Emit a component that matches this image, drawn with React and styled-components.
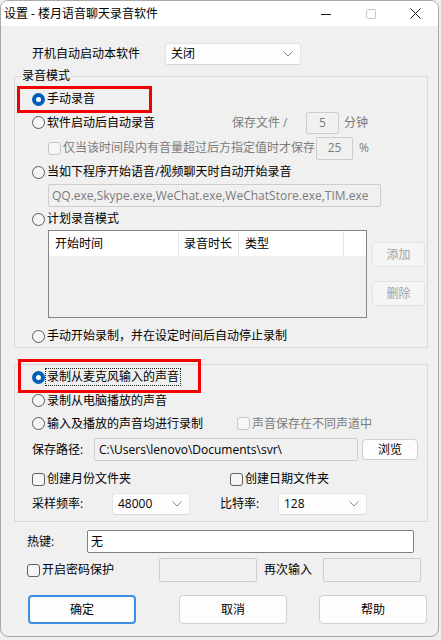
import React from 'react';
import styled, { createGlobalStyle } from 'styled-components';

const GlobalStyle = createGlobalStyle`
  html, body { margin: 0; padding: 0; }
  body {
    background: #efefef;
    font-family: "Open Sans", "Noto Sans CJK SC", "Microsoft YaHei", sans-serif;
    font-size: 12px;
    color: #000;
    overflow: hidden;
  }
  * { box-sizing: border-box; }
`;

const Window = styled.div`
  width: 439px;
  height: 637px;
  background: #f0f0f0;
  border: 1px solid #a8a8a8;
  border-radius: 8px;
  overflow: hidden;
  display: flex;
  flex-direction: column;
`;

const TitleBar = styled.div`
  height: 25px;
  flex-shrink: 0;
  background: #ffffff;
  display: flex;
  align-items: center;
`;

const TitleText = styled.div`
  flex: 1;
  padding-left: 3px;
  font-size: 12px;
  line-height: 14px;
  white-space: nowrap;
`;

const CaptionButton = styled.div`
  width: 45px;
  height: 25px;
  display: flex;
  align-items: center;
  justify-content: center;
`;

const Body = styled.div`
  display: flex;
  flex-direction: column;
  padding-top: 17px;
`;

const Row = styled.div`
  display: flex;
  align-items: center;
  height: ${p => p.$h}px;
  margin-top: ${p => p.$mt || 0}px;
  padding-left: ${p => p.$pl || 0}px;
  flex-shrink: 0;
  white-space: nowrap;
  line-height: 14px;
`;

const Label = styled.span`
  display: inline-flex;
  align-items: center;
  width: ${p => (p.$w ? `${p.$w}px` : 'auto')};
  margin-left: ${p => p.$ml || 0}px;
  color: ${p => (p.$muted ? '#7b7b7b' : '#000')};
  flex-shrink: 0;
`;

const Select = styled.div`
  width: ${p => p.$w}px;
  height: 22px;
  background: #fdfdfd;
  border: 1px solid #e4e4e4;
  border-bottom-color: #d6d6d6;
  border-radius: 3px;
  display: flex;
  align-items: center;
  justify-content: space-between;
  padding: 0 7px 0 5px;
  flex-shrink: 0;
`;

const GroupBox = styled.div`
  position: relative;
  width: 414px;
  height: ${p => p.$h}px;
  margin: ${p => p.$mt}px 0 0 13px;
  padding-top: ${p => p.$pt}px;
  border: 1px solid #d9d9d9;
  display: flex;
  flex-direction: column;
  flex-shrink: 0;
`;

const GroupTitle = styled.span`
  position: absolute;
  left: 6px;
  top: -8px;
  padding: 0 1px;
  background: #f0f0f0;
  line-height: 14px;
`;

const RedMark = styled.div`
  position: absolute;
  left: ${p => p.$x}px;
  top: ${p => p.$y}px;
  width: ${p => p.$w}px;
  height: ${p => p.$h}px;
  border: 3px solid #f40000;
  pointer-events: none;
`;

const Choice = styled.span`
  display: inline-flex;
  align-items: center;
  gap: 2px;
  width: ${p => (p.$w ? `${p.$w}px` : 'auto')};
  color: ${p => (p.$disabled ? '#7b7b7b' : '#000')};
  flex-shrink: 0;
`;

const RadioDot = styled.span`
  position: relative;
  width: 13px;
  height: 13px;
  border-radius: 50%;
  flex-shrink: 0;
  background: ${p => (p.$on ? '#005fb8' : '#f6f6f6')};
  border: ${p => (p.$on ? 'none' : '1px solid #5a5a5a')};
  &::after {
    content: '';
    display: ${p => (p.$on ? 'block' : 'none')};
    position: absolute;
    left: 4px;
    top: 4px;
    width: 5px;
    height: 5px;
    border-radius: 50%;
    background: #fff;
  }
`;

const CheckSquare = styled.span`
  width: 13px;
  height: 13px;
  border-radius: 3px;
  flex-shrink: 0;
  background: #f6f6f6;
  border: 1px solid ${p => (p.$disabled ? '#c6c6c6' : '#5f5f5f')};
`;

const FocusText = styled.span`
  outline: 1px dotted #222;
  outline-offset: 1px;
`;

const TextBox = styled.div`
  width: ${p => p.$w}px;
  height: ${p => p.$h || 23}px;
  margin-left: ${p => p.$ml || 0}px;
  margin-top: ${p => p.$mt || 0}px;
  background: ${p => (p.$white ? '#ffffff' : '#f0f0f0')};
  border: 1px solid ${p => (p.$white ? '#7f7f7f' : '#cdcdcd')};
  border-radius: 2px;
  color: ${p => (p.$muted ? '#7b7b7b' : '#000')};
  display: flex;
  align-items: center;
  justify-content: ${p => (p.$center ? 'center' : 'flex-start')};
  padding-left: ${p => (p.$center ? 0 : p.$pad ?? 3)}px;
  flex-shrink: 0;
  white-space: nowrap;
  overflow: hidden;
  line-height: 14px;
`;

const ListArea = styled.div`
  display: flex;
  height: 88px;
  padding-left: 33px;
  flex-shrink: 0;
`;

const List = styled.div`
  width: 319px;
  height: 88px;
  border: 1px solid #858585;
  background: #f0f0f0;
  display: flex;
  flex-direction: column;
`;

const ListHeader = styled.div`
  height: 25px;
  background: #ffffff;
  display: flex;
  flex-shrink: 0;
`;

const HeaderCell = styled.div`
  width: ${p => p.$w}px;
  padding-left: ${p => p.$pl}px;
  border-right: ${p => (p.$last ? 'none' : '1px solid #e5e5e5')};
  display: flex;
  align-items: center;
  flex-shrink: 0;
  line-height: 14px;
`;

const SideButtons = styled.div`
  display: flex;
  flex-direction: column;
  gap: 14px;
  padding-top: 12px;
  margin-left: 5px;
`;

const Button = styled.div`
  width: ${p => p.$w}px;
  height: ${p => p.$h}px;
  margin-left: ${p => p.$ml || 0}px;
  background: ${p => (p.$disabled ? '#f5f5f5' : '#fdfdfd')};
  border: ${p =>
    p.$primary ? '2px solid #3a8ee6' : `1px solid ${p.$disabled ? '#e3e3e3' : '#d0d0d0'}`};
  border-radius: 4px;
  color: ${p => (p.$disabled ? '#a2a2a2' : '#000')};
  display: flex;
  align-items: center;
  justify-content: center;
  flex-shrink: 0;
  line-height: 14px;
`;

const Chevron = () => (
  <svg width="10" height="6" viewBox="0 0 10 6">
    <path d="M0.5 0.5 L5 5 L9.5 0.5" fill="none" stroke="#8a8a8a" strokeWidth="1" />
  </svg>
);

const Radio = ({ on, children, w }) => (
  <Choice $w={w}>
    <RadioDot $on={on} />
    {children}
  </Choice>
);

const Check = ({ disabled, children, w }) => (
  <Choice $w={w} $disabled={disabled}>
    <CheckSquare $disabled={disabled} />
    {children}
  </Choice>
);

export default function App() {
  return (
    <>
      <GlobalStyle />
      <Window>
        <TitleBar>
          <TitleText>设置 - 楼月语音聊天录音软件</TitleText>
          <CaptionButton>
            <svg width="10" height="10" viewBox="0 0 10 10">
              <path d="M0 5.5 H10" stroke="#1a1a1a" strokeWidth="1" />
            </svg>
          </CaptionButton>
          <CaptionButton>
            <svg width="10" height="10" viewBox="0 0 10 10">
              <rect x="0.5" y="0.5" width="9" height="9" rx="1" fill="none" stroke="#c4c4c4" strokeWidth="1" />
            </svg>
          </CaptionButton>
          <CaptionButton>
            <svg width="11" height="11" viewBox="0 0 11 11">
              <path d="M0.5 0.5 L10.5 10.5 M10.5 0.5 L0.5 10.5" stroke="#1a1a1a" strokeWidth="1" />
            </svg>
          </CaptionButton>
        </TitleBar>

        <Body>
          <Row $h={22} $pl={31}>
            <Label $w={133}>开机自动启动本软件</Label>
            <Select $w={136}>
              <span>关闭</span>
              <Chevron />
            </Select>
          </Row>

          <GroupBox $mt={11} $h={272} $pt={11}>
            <GroupTitle>录音模式</GroupTitle>
            <RedMark $x={2} $y={9} $w={135} $h={27} />
            <Row $h={22} $pl={17}>
              <Radio on>手动录音</Radio>
            </Row>
            <Row $h={25} $pl={17}>
              <Radio w={200}>软件启动后自动录音</Radio>
              <Label $w={74} $muted>保存文件 /</Label>
              <TextBox $w={33} $h={22} $center $muted>5</TextBox>
              <Label $ml={5} $muted>分钟</Label>
            </Row>
            <Row $h={26} $pl={33}>
              <Check disabled w={268}>仅当该时间段内有音量超过后方指定值时才保存</Check>
              <TextBox $w={37} $center $muted>25</TextBox>
              <Label $ml={6} $muted>%</Label>
            </Row>
            <Row $h={22} $pl={17}>
              <Radio>当如下程序开始语音/视频聊天时自动开始录音</Radio>
            </Row>
            <TextBox $w={333} $ml={33} $mt={1} $muted>
              QQ.exe,Skype.exe,WeChat.exe,WeChatStore.exe,TIM.exe
            </TextBox>
            <Row $h={22} $mt={1} $pl={17}>
              <Radio>计划录音模式</Radio>
            </Row>
            <ListArea>
              <List>
                <ListHeader>
                  <HeaderCell $w={130} $pl={6}>开始时间</HeaderCell>
                  <HeaderCell $w={60} $pl={5}>录音时长</HeaderCell>
                  <HeaderCell $w={105} $pl={6}>类型</HeaderCell>
                  <HeaderCell $w={22} $pl={0} $last />
                </ListHeader>
              </List>
              <SideButtons>
                <Button $w={53} $h={25} $disabled>添加</Button>
                <Button $w={53} $h={25} $disabled>删除</Button>
              </SideButtons>
            </ListArea>
            <Row $h={22} $mt={7} $pl={17}>
              <Radio>手动开始录制，并在设定时间后自动停止录制</Radio>
            </Row>
          </GroupBox>

          <GroupBox $mt={16} $h={158} $pt={1}>
            <RedMark $x={3} $y={-6} $w={183} $h={34} />
            <Row $h={22} $pl={17}>
              <Radio on>
                <FocusText>录制从麦克风输入的声音</FocusText>
              </Radio>
            </Row>
            <Row $h={25} $pl={17}>
              <Radio>录制从电脑播放的声音</Radio>
            </Row>
            <Row $h={21} $pl={17}>
              <Radio w={205}>输入及播放的声音均进行录制</Radio>
              <Check disabled>声音保存在不同声道中</Check>
            </Row>
            <Row $h={25} $mt={3} $pl={17}>
              <Label $w={62}>保存路径:</Label>
              <TextBox $w={264} $pad={4}>C:\Users\lenovo\Documents\svr\</TextBox>
              <Button $w={56} $h={21} $ml={4}>浏览</Button>
            </Row>
            <Row $h={24} $mt={5} $pl={17}>
              <Check w={198}>创建月份文件夹</Check>
              <Check>创建日期文件夹</Check>
            </Row>
            <Row $h={22} $mt={2} $pl={17}>
              <Label $w={80}>采样频率:</Label>
              <Select $w={78}>
                <span>48000</span>
                <Chevron />
              </Select>
              <Label $w={58} $ml={30}>比特率:</Label>
              <Select $w={89}>
                <span>128</span>
                <Chevron />
              </Select>
            </Row>
          </GroupBox>

          <Row $h={23} $mt={8} $pl={26}>
            <Label $w={60}>热键:</Label>
            <TextBox $w={327} $white>无</TextBox>
          </Row>
          <Row $h={24} $mt={5} $pl={26}>
            <Check w={132}>开启密码保护</Check>
            <TextBox $w={98} $h={24} />
            <Label $w={59} $ml={7}>再次输入</Label>
            <TextBox $w={98} $h={24} />
          </Row>
          <Row $h={29} $mt={13} $pl={27}>
            <Button $w={108} $h={29} $primary>确定</Button>
            <Button $w={108} $h={29} $ml={43}>取消</Button>
            <Button $w={108} $h={29} $ml={32}>帮助</Button>
          </Row>
        </Body>
      </Window>
    </>
  );
}
